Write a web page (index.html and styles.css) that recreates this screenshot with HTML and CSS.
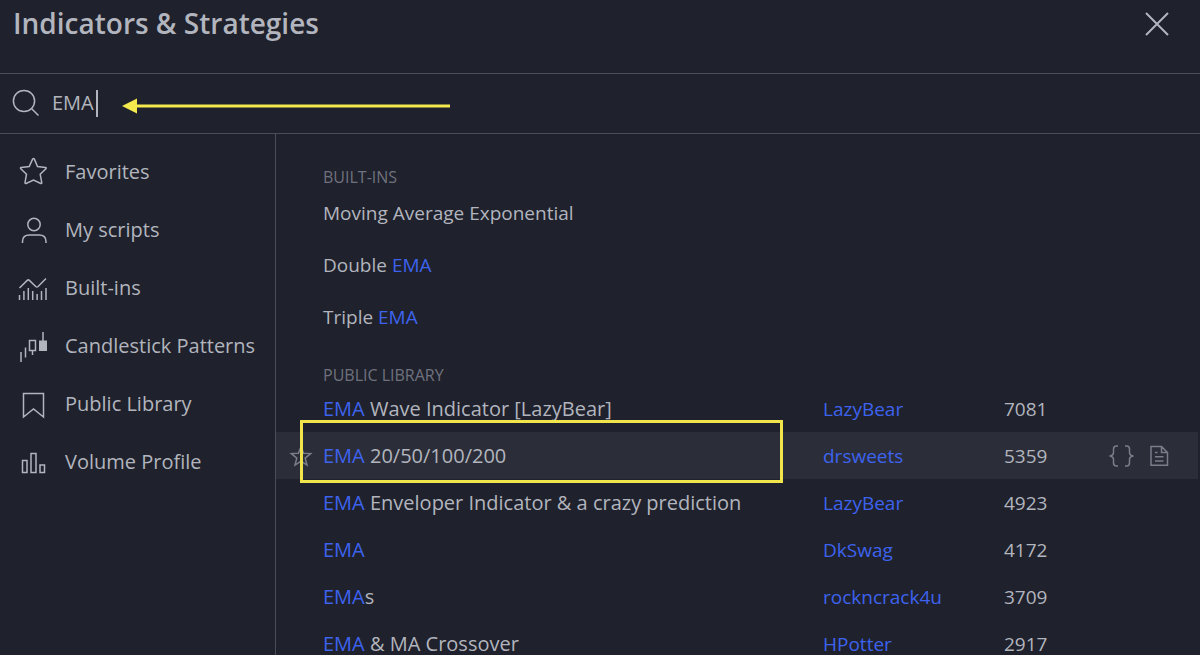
FILE: index.html
```html
<!DOCTYPE html>
<html lang="en">
<head>
<meta charset="utf-8">
<title>Indicators &amp; Strategies</title>
<link rel="stylesheet" href="styles.css">
</head>
<body>
<div class="dialog">
  <header class="header">
    <h1 class="title">Indicators &amp; Strategies</h1>
    <button class="close" type="button" aria-label="Close">
      <svg width="26" height="26" viewBox="0 0 26 26"><path d="M2 2l22 22M24 2L2 24"/></svg>
    </button>
  </header>
  <div class="search">
    <svg class="search-icon" width="28" height="28" viewBox="0 0 28 28"><circle cx="12" cy="12" r="10.6"/><path d="M19.5 19.5l7 7"/></svg>
    <div class="field">
      <input class="query" type="text" value="EMA" aria-label="Search">
      <span class="caret"></span>
    </div>
    <svg class="arrow" width="328" height="16" viewBox="0 0 328 16"><path class="arrow-line" d="M14 8H328"/><path class="arrow-head" d="M0 8L15 .5v15z"/></svg>
  </div>
  <div class="body">
    <nav class="sidebar">
      <button class="nav-item" type="button">
        <svg width="30" height="30" viewBox="0 0 30 30"><path d="M14.600 2.200q.9-1.600 1.800 0l3.100 7.400 8 .9q1.200.2.4 1.300l-5.700 5.500 1.600 8.500q0 1-1 .7L15.500 23l-7.400 3.500q-1.100.2-1.100-.8l1.500-8.500-5.700-5.400q-.8-1 .3-1.200l8.100-1z"/></svg>
        <span>Favorites</span>
      </button>
      <button class="nav-item" type="button">
        <svg width="30" height="30" viewBox="0 0 30 30"><circle cx="16" cy="9.500" r="6.200"/><path d="M4.500 28v-1.500q0-6.500 7-6.500h9.500q7 0 7 6.500V28"/></svg>
        <span>My scripts</span>
      </button>
      <button class="nav-item" type="button">
        <svg width="30" height="30" viewBox="0 0 30 30"><path d="M1.500 15l7.700-7.600q1.100-1 2.200 0l6.300 6.100q1.200 1 2.400 0L28 5.500M1.500 27v-5M5.900 27v-9M10.300 27V15M14.700 27v-9M19.100 27v-6M23.500 27v-9M28 27V15"/></svg>
        <span>Built-ins</span>
      </button>
      <button class="nav-item" type="button">
        <svg width="30" height="30" viewBox="0 0 30 30"><path d="M3 31V21M7.500 26.500v-10M11.500 9.500h6v10h-6zM14.500 19.500V24M25 10V1"/><path class="solid" d="M21 9.500h8V20h-8z"/></svg>
        <span>Candlestick Patterns</span>
      </button>
      <button class="nav-item" type="button">
        <svg width="30" height="30" viewBox="0 0 30 30"><path d="M5.500 4.500h20V28l-10-8-10 8z"/></svg>
        <span>Public Library</span>
      </button>
      <button class="nav-item" type="button">
        <svg width="30" height="30" viewBox="0 0 30 30"><path d="M4.500 13.500h4.500v12H4.500zM13 6.500h5v19h-5zM22 18h4.500v7.500H22z"/></svg>
        <span>Volume Profile</span>
      </button>
    </nav>
    <main class="results">
      <h2 class="heading">BUILT-INS</h2>
      <ul class="builtins">
        <li>Moving Average Exponential</li>
        <li>Double <mark>EMA</mark></li>
        <li>Triple <mark>EMA</mark></li>
      </ul>
      <h2 class="heading heading-next">PUBLIC LIBRARY</h2>
      <table class="scripts">
        <colgroup><col class="col-star"><col><col class="col-author"><col class="col-likes"><col class="col-actions"></colgroup>
        <tr><td></td><td class="name"><mark>EMA</mark> Wave Indicator [LazyBear]</td><td><a href="#">LazyBear</a></td><td>7081</td><td></td></tr>
        <tr class="active">
          <td><button class="icon star" type="button" aria-label="Add to favorites"><svg width="22" height="22" viewBox="0 0 22 22"><path d="M11 1.500l2.600 6.700 7.100.4-5.500 4.500 1.800 7L11 16.200l-6 3.900 1.800-7L1.300 8.600l7.100-.4z"/></svg></button></td>
          <td class="name marked"><mark>EMA</mark> 20/50/100/200<span class="highlight"></span></td>
          <td><a href="#">drsweets</a></td><td>5359</td>
          <td><div class="actions">
            <button class="icon" type="button" aria-label="Source code"><svg width="27" height="22" viewBox="0 0 27 22"><path d="M10 1H8.500Q5.500 1 5.500 4v3.500Q5.500 10.500 1.500 11q4 .5 4 3.500V18q0 3 3 3H10M17 1h1.500q3 0 3 3v3.500q0 3 4 3.500-4 .5-4 3.500V18q0 3-3 3H17"/></svg></button>
            <button class="icon" type="button" aria-label="Documentation"><svg width="20" height="22" viewBox="0 0 20 22"><path d="M2 1.500h10.500l6 6v12.800H2zM12.500 1.500v6h6M6 7.500h2.500M6 11.700h8.500M6 16h8.500"/></svg></button>
          </div></td>
        </tr>
        <tr><td></td><td class="name"><mark>EMA</mark> Enveloper Indicator &amp; a crazy prediction</td><td><a href="#">LazyBear</a></td><td>4923</td><td></td></tr>
        <tr><td></td><td class="name"><mark>EMA</mark></td><td><a href="#">DkSwag</a></td><td>4172</td><td></td></tr>
        <tr><td></td><td class="name"><mark>EMA</mark>s</td><td><a href="#">rockncrack4u</a></td><td>3709</td><td></td></tr>
        <tr><td></td><td class="name"><mark>EMA</mark> &amp; MA Crossover</td><td><a href="#">HPotter</a></td><td>2917</td><td></td></tr>
      </table>
    </main>
  </div>
</div>
</body>
</html>
```
FILE: styles.css
```css
* { box-sizing: border-box; }
html, body { height: 100%; }
body {
  margin: 0;
  overflow: hidden;
  background: #1f212c;
  color: #b2b5be;
  font: 19px/24px "Open Sans", "Noto Sans", sans-serif;
}
button, input { font: inherit; color: inherit; background: none; border: 0; padding: 0; }
button { cursor: pointer; }
svg { display: block; flex: none; fill: none; stroke: currentColor; stroke-width: 1.5; overflow: visible; }
.dialog { display: flex; flex-direction: column; height: 100%; }
.header {
  display: flex;
  justify-content: space-between;
  align-items: flex-start;
  flex: none;
  height: 74px;
  padding: 4px 30px 0 13px;
  border-bottom: 1px solid #4a4c57;
}
.title { margin: 0; font-size: 28px; line-height: 38px; font-weight: 600; }
.close { padding-top: 7px; }
.close svg { stroke-width: 2; }
.search {
  position: relative;
  display: flex;
  align-items: center;
  gap: 12px;
  flex: none;
  height: 60px;
  padding: 0 12px 2px;
  border-bottom: 1px solid #4a4c57;
}
.field { position: relative; flex: 1; }
.query { display: block; width: 100%; height: 30px; font-size: 20px; outline: 0; }
.caret { position: absolute; left: 44px; top: 2px; width: 2px; height: 27px; background: #b2b5be; }
.arrow { position: absolute; left: 122px; top: 24px; }
.arrow-line { stroke: #f4e94d; stroke-width: 3; }
.arrow-head { fill: #f4e94d; stroke: none; }
.body { display: flex; flex: 1; min-height: 0; }
.sidebar { flex: none; width: 276px; padding-top: 9px; border-right: 1px solid #4a4c57; }
.nav-item { display: flex; align-items: center; gap: 17px; width: 100%; height: 58px; padding-left: 18px; font-size: 20px; text-align: left; }
.solid { fill: currentColor; stroke: none; }
.results { flex: 1; min-width: 0; padding: 33px 2px 0 0; overflow: hidden; }
.heading { margin: 0; padding-left: 47px; font-size: 16px; line-height: 20px; font-weight: 400; color: #6f727e; }
.heading-next { margin-top: 22px; }
.builtins { margin: 0; padding: 0 0 0 47px; list-style: none; line-height: 52px; }
mark, a { color: #3d63ee; background: none; text-decoration: none; }
.scripts { width: 100%; table-layout: fixed; border-collapse: collapse; }
.scripts td { height: 47px; padding: 0; white-space: nowrap; }
.scripts .name { font-size: 20px; }
.col-star { width: 47px; }
.col-author { width: 181px; }
.col-likes { width: 104px; }
.col-actions { width: 90px; }
.active { background: #2b2d38; }
.icon { display: block; color: #7b7e89; }
.star { margin-left: 14px; }
.actions { display: flex; align-items: center; gap: 14px; }
.marked { position: relative; }
.highlight { position: absolute; left: -23px; top: -12px; width: 483px; height: 63px; border: 3px solid #f0e64c; pointer-events: none; }
```
